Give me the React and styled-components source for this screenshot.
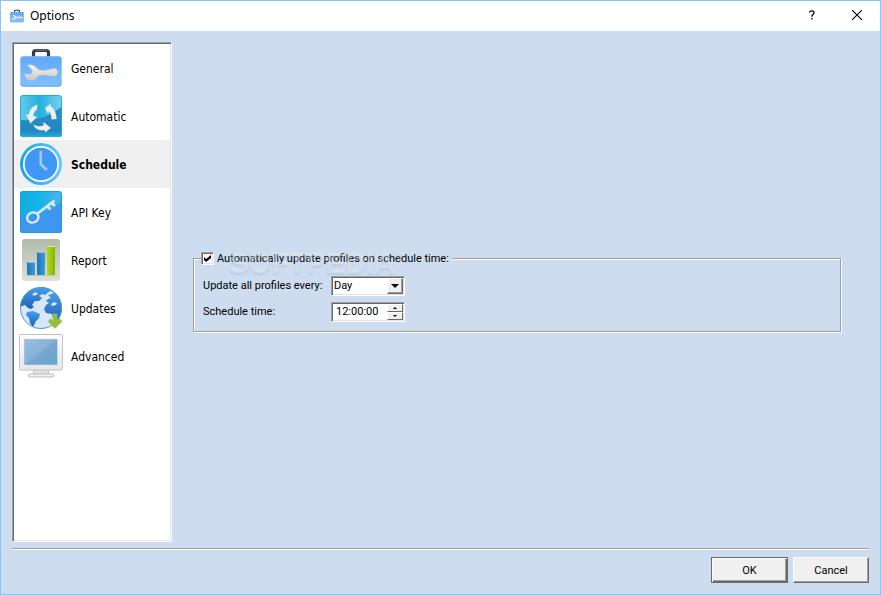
import { useState } from 'react'
import styled, { createGlobalStyle } from 'styled-components'

const GlobalStyle = createGlobalStyle`
  * {
    box-sizing: border-box;
  }
  body {
    margin: 0;
    background: #cddcef;
    color: #000;
    font-family: 'Roboto', Tahoma, sans-serif;
    font-size: 11px;
  }
  button, input, select {
    font: inherit;
    color: inherit;
    margin: 0;
  }
`

const Window = styled.div`
  display: flex;
  flex-direction: column;
  min-height: 100vh;
  border: 1px solid #84c6ff;
  background: #cddcef;
`
const TitleBar = styled.header`
  display: flex;
  align-items: center;
  height: 30px;
  padding-left: 9px;
  background: #fff;
`
const TitleIcon = styled.span`
  display: flex;
  width: 14px;
  height: 14px;
`
const Title = styled.h1`
  flex: 1;
  margin: 0 0 0 6px;
  font-family: 'Noto Sans', sans-serif;
  font-size: 12px;
  font-weight: 400;
  line-height: 14px;
`
const TitleButton = styled.button`
  display: flex;
  align-items: center;
  justify-content: center;
  width: 45px;
  height: 30px;
  padding: 0 2px 2px 0;
  border: 0;
  background: transparent;
`
const Content = styled.main`
  display: flex;
  flex: 1;
  margin: 11px 11px 0;
`
const Sidebar = styled.nav`
  width: 160px;
  border: 1px solid;
  border-color: #a0a0a0 #fff #fff #a0a0a0;
  background: #fff;
  box-shadow: inset 1px 1px 0 #696969, inset -1px -1px 0 #e3e3e3;
  padding: 1px;
`
const SidebarItem = styled.button`
  display: flex;
  align-items: center;
  gap: 9px;
  width: 100%;
  height: 48px;
  padding: 0 6px;
  border: 0;
  background: ${props => (props.$active ? '#f0f0f0' : 'transparent')};
  font-family: 'DejaVu Sans Condensed', Tahoma, sans-serif;
  font-size: 12px;
  font-weight: ${props => (props.$active ? 700 : 400)};
  text-align: left;
`
const ItemName = styled.span`
  padding-top: 2px;
`
const Icon = styled.svg`
  display: block;
  flex: none;
  width: ${props => props.$size || 42}px;
  height: ${props => props.$size || 42}px;
  overflow: visible;
`
const Panel = styled.section`
  display: flex;
  flex: 1;
  flex-direction: column;
  justify-content: center;
  padding: 0 28px 2px 21px;
`
const Group = styled.fieldset`
  position: relative;
  min-width: 0;
  margin: 0;
  padding: 9px;
  border: 1px solid #a0a0a0;
  box-shadow: 1px 1px 0 #fff, inset 1px 1px 0 #fff;
`
const Legend = styled.legend`
  margin-left: -2px;
  padding: 0 3px 0 0;
  background: #cddcef;
`
const CheckLabel = styled.label`
  display: flex;
  align-items: center;
  gap: 3px;
  height: 16px;
`
const Checkbox = styled.input`
  appearance: none;
  width: 13px;
  height: 13px;
  border: 1px solid;
  border-color: #a0a0a0 #fff #fff #a0a0a0;
  background: #fff;
  box-shadow: inset 1px 1px 0 #696969, inset -1px -1px 0 #e3e3e3;

  &:checked::before {
    content: '';
    display: block;
    width: 7px;
    height: 7px;
    margin: 2px;
    background: #000;
    clip-path: polygon(0 29%, 29% 58%, 100% 0, 100% 42%, 29% 100%, 0 72%);
  }
`
const Fields = styled.div`
  display: grid;
  grid-template-columns: 122px 74px;
  row-gap: 6px;
  column-gap: 6px;
  align-items: center;
  white-space: nowrap;
`
const Sunken = styled.div`
  position: relative;
  display: flex;
  height: 20px;
  padding: 1px;
  border: 1px solid;
  border-color: #a0a0a0 #fff #fff #a0a0a0;
  background: #fff;
  box-shadow: inset 1px 1px 0 #696969, inset -1px -1px 0 #e3e3e3;
`
const Select = styled.select`
  appearance: none;
  flex: 1;
  min-width: 0;
  padding: 0 16px 0 1px;
  border: 0;
  background: transparent;
`
const SelectArrow = styled.span`
  position: absolute;
  top: 1px;
  right: 1px;
  bottom: 1px;
  display: flex;
  align-items: center;
  justify-content: center;
  width: 16px;
  border: 1px solid;
  border-color: #fff #696969 #696969 #fff;
  background: #f0f0f0;
  box-shadow: inset -1px -1px 0 #a0a0a0;
  pointer-events: none;
`
const TimeInput = styled.input`
  flex: 1;
  min-width: 0;
  padding: 0 0 0 3px;
  border: 0;
  background: transparent;
`
const Spinner = styled.div`
  display: flex;
  flex-direction: column;
  width: 16px;
`
const SpinButton = styled.button`
  display: flex;
  flex: 1;
  align-items: center;
  justify-content: center;
  min-height: 0;
  padding: 0;
  border: 1px solid;
  border-color: #fff #696969 #696969 #fff;
  background: #f0f0f0;
`
const Watermark = styled.span`
  position: absolute;
  top: -21px;
  left: 35px;
  color: rgba(255, 255, 255, 0.3);
  font-family: 'Liberation Sans', sans-serif;
  font-size: 29px;
  font-weight: 700;
  line-height: 34px;
  text-shadow: 0 2px 2px rgba(120, 145, 180, 0.2);
  white-space: nowrap;
  pointer-events: none;

  sup {
    font-size: 10px;
    line-height: 10px;
    vertical-align: 14px;
  }
`
const Footer = styled.footer`
  display: flex;
  justify-content: flex-end;
  gap: 5px;
  margin: 6px 11px 11px;
  padding-top: 8px;
  border-top: 1px solid #a0a0a0;
  box-shadow: inset 0 1px 0 #fff;
`
const Button = styled.button`
  width: ${props => (props.$primary ? 77 : 76)}px;
  height: 26px;
  padding: 0;
  border: 1px solid;
  border-color: ${props => (props.$primary ? '#696969' : '#fff #696969 #696969 #fff')};
  background: #f0f0f0;
  box-shadow: ${props =>
    props.$primary
      ? 'inset 1px 1px 0 #fff, inset -1px -1px 0 #696969, inset -2px -2px 0 #a0a0a0'
      : 'inset -1px -1px 0 #a0a0a0'};
`

const GeneralIcon = ({ size }) => (
  <Icon $size={size} viewBox="0 0 42 42" aria-hidden="true">
    <defs>
      <linearGradient id="caseFill" x2="0" y2="1">
        <stop offset="0" stopColor="#5fa9f6" />
        <stop offset="1" stopColor="#83c0ff" />
      </linearGradient>
      <linearGradient id="wrenchFill" x2="0" y2="1">
        <stop offset="0" stopColor="#f4f3ef" />
        <stop offset="1" stopColor="#c9cac8" />
      </linearGradient>
    </defs>
    <path d="M13.500 9.500V6Q13.500 3.500 16 3.500H26Q28.500 3.500 28.500 6V9.500" fill="none" stroke="#343942" strokeWidth="3.200" />
    <path d="M15.500 3.200H26.500" stroke="#7d828a" strokeWidth="1" />
    <rect x="0.300" y="9.300" width="41.400" height="30.400" rx="3" fill="url(#caseFill)" />
    <path d="M1 36.500Q1 39 4 39H38Q41 39 41 36.500" fill="none" stroke="#64a6ea" />
    <path
      d="M7 18.500C11 16.500 15.500 18.500 17.500 22C22 24.500 29 22.500 34 21.500C37 21.500 38.500 24 37.500 27C36.500 29.500 34 29.500 31 29C25 28 21 28 18 29C16 33.500 9.500 35 6.500 31.500C4.800 29.800 4.500 27.500 5 26C7 27.500 10 28 11.800 26C13 24 11.500 21.500 7 18.500Z"
      fill="url(#wrenchFill)"
      stroke="#aebdce"
      strokeWidth="0.500"
    />
  </Icon>
)

const AutomaticIcon = () => (
  <Icon viewBox="0 0 42 42" aria-hidden="true">
    <defs>
      <linearGradient id="autoTop">
        <stop offset="0" stopColor="#68cdea" />
        <stop offset="0.450" stopColor="#23b0dc" />
        <stop offset="1" stopColor="#79d1ee" />
      </linearGradient>
      <linearGradient id="autoLow" x2="0" y2="1">
        <stop offset="0" stopColor="#2b8fc5" />
        <stop offset="0.800" stopColor="#2387bd" />
        <stop offset="1" stopColor="#0eb2e4" />
      </linearGradient>
    </defs>
    <rect width="42" height="42" rx="3" fill="url(#autoTop)" />
    <path d="M0 25C17 26 31 21 42 11V39Q42 42 39 42H3Q0 42 0 39Z" fill="url(#autoLow)" />
    <rect x="0.500" y="0.500" width="41" height="41" rx="3" fill="none" stroke="#1eaedc" />
    <g fill="#eceff1">
      <path d="M17.500 9.500L17 14.500Q14 16 13 20.500L17 22L10.500 28.500L5.500 19L8.500 20Q10 11.500 17.500 9.500Z" />
      <path d="M25 13L31 8.500L30.500 11Q36.500 15 36.500 24L31.500 24.500Q31.500 19 29 16L28 19Z" />
      <path d="M13 29.500Q18 32.500 23.500 30.500L23.500 27L31 33L25 37.500L24.500 35Q17 37 13 29.500Z" />
    </g>
  </Icon>
)

const ScheduleIcon = () => (
  <Icon viewBox="0 0 42 42" aria-hidden="true">
    <defs>
      <linearGradient id="clockRing">
        <stop offset="0" stopColor="#12a8e2" />
        <stop offset="1" stopColor="#6cc6ff" />
      </linearGradient>
    </defs>
    <circle cx="21" cy="21" r="21" fill="url(#clockRing)" />
    <circle cx="21" cy="21" r="18" fill="#fff" />
    <circle cx="21" cy="21" r="16.300" fill="#3d98f6" />
    <path d="M20.800 8V21.500L27 27" fill="none" stroke="#a9caf0" strokeWidth="2.600" />
  </Icon>
)

const KeyIcon = () => (
  <Icon viewBox="0 0 42 42" aria-hidden="true">
    <defs>
      <linearGradient id="keyTop">
        <stop offset="0" stopColor="#12abe2" />
        <stop offset="0.400" stopColor="#12b4e6" />
        <stop offset="1" stopColor="#4ab6e9" />
      </linearGradient>
    </defs>
    <rect width="42" height="42" rx="3" fill="url(#keyTop)" />
    <path d="M0 26C16 26 30 20 42 10V39Q42 42 39 42H3Q0 42 0 39Z" fill="#3e96ef" />
    <rect x="0.500" y="0.500" width="41" height="41" rx="3" fill="none" stroke="#149fdf" />
    <g fill="none" stroke="#e3e8ec">
      <ellipse cx="12.800" cy="26.500" rx="5.800" ry="5" strokeWidth="2.400" transform="rotate(-25 12.800 26.500)" />
      <path d="M17.500 22.500L34.500 9.500" strokeWidth="2.400" />
      <path d="M27 15L30.500 18.500M31.500 11.500L35 15" strokeWidth="2.600" />
    </g>
  </Icon>
)

const ReportIcon = () => (
  <Icon viewBox="0 0 42 42" aria-hidden="true">
    <defs>
      <linearGradient id="reportBg" x2="0" y2="1">
        <stop offset="0" stopColor="#b1baaa" />
        <stop offset="1" stopColor="#dde2d4" />
      </linearGradient>
      <linearGradient id="barBlue">
        <stop offset="0" stopColor="#1b78bb" />
        <stop offset="1" stopColor="#419ad6" />
      </linearGradient>
      <linearGradient id="barGreen">
        <stop offset="0" stopColor="#b0d81e" />
        <stop offset="1" stopColor="#7eb900" />
      </linearGradient>
    </defs>
    <rect x="2" width="38" height="42" rx="3" fill="url(#reportBg)" />
    <path d="M6 36.500H37" stroke="#bfc5b9" />
    <rect x="7" y="23" width="8" height="13" rx="1" fill="url(#barBlue)" />
    <rect x="17" y="13" width="8" height="23" rx="1" fill="url(#barBlue)" />
    <rect x="27" y="7" width="8" height="29" rx="1" fill="url(#barGreen)" />
    <path d="M8 23.500H15M18 13.500H25" stroke="#88c5eb" />
    <path d="M28 7.500H35" stroke="#dcf18d" />
  </Icon>
)

const UpdatesIcon = () => (
  <Icon viewBox="0 0 42 42" aria-hidden="true">
    <defs>
      <linearGradient id="landFill" x2="0" y2="1">
        <stop offset="0" stopColor="#4b9de8" />
        <stop offset="1" stopColor="#1d62b4" />
      </linearGradient>
      <clipPath id="globeClip">
        <circle cx="21" cy="21" r="21" />
      </clipPath>
    </defs>
    <circle cx="21" cy="21" r="20.800" fill="#d5e7f8" />
    <g clipPath="url(#globeClip)" fill="url(#landFill)">
      <path d="M0 20V0H36L34 5L30 4L25 8L22 7L19 9L22 11L19 14L15 14L12 18L14 20L11 22L8 21L5 18L2 19Z" />
      <path d="M7 25L13 24L20 27L19 31L16 34L13 40L10 36L9 31L6 28Z" />
      <path d="M28 8L32 7L36 4L42 10V32L36 36L33 32L32 27L26 26L24 22L26 18L29 16L26 14L28 12L31 11Z" />
    </g>
    <g fill="#d5e7f8">
      <path d="M31 17L34 15L37 16L36 18L32 19Z" />
      <path d="M12 7L16 5L18 7L14 9Z" />
    </g>
    <circle cx="21" cy="21" r="20.500" fill="none" stroke="#4f99df" />
    <path d="M33 27H37V34L40 31.500L42 34.500L35 41.500L28 34.500L30.500 31.500L33 34Z" fill="#94bd3b" stroke="#aacb61" strokeWidth="0.600" />
  </Icon>
)

const AdvancedIcon = () => (
  <Icon viewBox="0 0 42 42" aria-hidden="true">
    <defs>
      <linearGradient id="screenFill" x2="1" y2="1">
        <stop offset="0" stopColor="#9bbfe0" />
        <stop offset="0.450" stopColor="#89b2d8" />
        <stop offset="0.550" stopColor="#75a6d0" />
        <stop offset="1" stopColor="#6aa5d1" />
      </linearGradient>
      <linearGradient id="caseGrey" x2="0" y2="1">
        <stop offset="0" stopColor="#fdfdfd" />
        <stop offset="1" stopColor="#e6e6e8" />
      </linearGradient>
    </defs>
    <rect x="13.500" y="34" width="15" height="6" fill="#dedfe1" stroke="#c7c7ca" />
    <rect x="8.500" y="39" width="25" height="3" rx="1" fill="#f0f0f0" stroke="#bdbdc0" />
    <rect x="-0.500" y="-0.500" width="43" height="35.500" rx="1.500" fill="url(#caseGrey)" stroke="#c1c2c5" />
    <rect x="4" y="4" width="33.500" height="26" fill="url(#screenFill)" stroke="#d8e4ef" strokeWidth="0.500" />
  </Icon>
)

const pages = [
  { name: 'General', icon: GeneralIcon },
  { name: 'Automatic', icon: AutomaticIcon },
  { name: 'Schedule', icon: ScheduleIcon },
  { name: 'API Key', icon: KeyIcon },
  { name: 'Report', icon: ReportIcon },
  { name: 'Updates', icon: UpdatesIcon },
  { name: 'Advanced', icon: AdvancedIcon },
]

const App = () => {
  const [page, setPage] = useState('Schedule')

  return (
    <>
      <GlobalStyle />
      <Window>
        <TitleBar>
          <TitleIcon><GeneralIcon size={14} /></TitleIcon>
          <Title>Options</Title>
          <TitleButton type="button" aria-label="Help">
            <svg width="8" height="10" viewBox="0 0 8 10" fill="none" stroke="#000" strokeWidth="1.300">
              <path d="M1.500 2.500Q1.800 0.800 3.800 0.800Q6 0.800 6 2.700Q6 3.800 4.800 4.600Q3.800 5.300 3.800 6.800M3.800 8V9.600" />
            </svg>
          </TitleButton>
          <TitleButton type="button" aria-label="Close">
            <svg width="10" height="10" viewBox="0 0 10 10" stroke="#000" strokeWidth="1.100">
              <path d="M0 0L10 10M10 0L0 10" />
            </svg>
          </TitleButton>
        </TitleBar>
        <Content>
          <Sidebar>
            {pages.map(({ name, icon: PageIcon }) => (
              <SidebarItem key={name} type="button" $active={name === page} onClick={() => setPage(name)}>
                <PageIcon />
                <ItemName>{name}</ItemName>
              </SidebarItem>
            ))}
          </Sidebar>
          <Panel>
            <Group>
              <Legend>
                <CheckLabel>
                  <Checkbox type="checkbox" defaultChecked />
                  Automatically update profiles on schedule time:
                </CheckLabel>
              </Legend>
              <Fields>
                <label htmlFor="every">Update all profiles every:</label>
                <Sunken>
                  <Select id="every" defaultValue="Day">
                    <option>Day</option>
                    <option>Week</option>
                    <option>Month</option>
                  </Select>
                  <SelectArrow>
                    <svg width="8" height="4" viewBox="0 0 8 4"><path d="M0 0H8L4 4Z" /></svg>
                  </SelectArrow>
                </Sunken>
                <label htmlFor="time">Schedule time:</label>
                <Sunken>
                  <TimeInput id="time" type="text" defaultValue="12:00:00" />
                  <Spinner>
                    <SpinButton type="button" aria-label="Later">
                      <svg width="4" height="2" viewBox="0 0 4 2"><path d="M0 2L2 0L4 2Z" /></svg>
                    </SpinButton>
                    <SpinButton type="button" aria-label="Earlier">
                      <svg width="4" height="2" viewBox="0 0 4 2"><path d="M0 0L2 2L4 0Z" /></svg>
                    </SpinButton>
                  </Spinner>
                </Sunken>
              </Fields>
              <Watermark aria-hidden="true">SOFTPEDIA<sup>®</sup></Watermark>
            </Group>
          </Panel>
        </Content>
        <Footer>
          <Button type="button" $primary>OK</Button>
          <Button type="button">Cancel</Button>
        </Footer>
      </Window>
    </>
  )
}

export default App
